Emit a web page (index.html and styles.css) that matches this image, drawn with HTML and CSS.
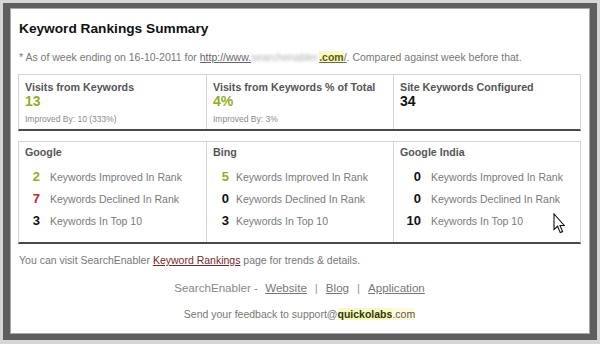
FILE: index.html
```html
<!DOCTYPE html>
<html>
<head>
<meta charset="utf-8">
<link rel="stylesheet" href="styles.css">
</head>
<body>
<div class="frame">
  <div class="content">
    <h1 class="title">Keyword Rankings Summary</h1>
    <p class="note">* As of week ending on 16-10-2011 for <a class="url" href="#">http://www.<span class="blur">searchenabler</span><span class="hl">.com</span>/</a>. Compared against week before that.</p>

    <div class="grid stats">
      <div class="cell">
        <div class="label">Visits from Keywords</div>
        <div class="value green">13</div>
        <div class="small">Improved By: 10 (333%)</div>
      </div>
      <div class="cell">
        <div class="label">Visits from Keywords % of Total</div>
        <div class="value green">4%</div>
        <div class="small">Improved By: 3%</div>
      </div>
      <div class="cell">
        <div class="label">Site Keywords Configured</div>
        <div class="value">34</div>
      </div>
    </div>

    <div class="grid engines">
      <div class="cell eng e1">
        <div class="label">Google</div>
        <div class="row"><span class="num green">2</span><span class="txt">Keywords Improved In Rank</span></div>
        <div class="row"><span class="num red">7</span><span class="txt">Keywords Declined In Rank</span></div>
        <div class="row"><span class="num">3</span><span class="txt">Keywords In Top 10</span></div>
      </div>
      <div class="cell eng e2">
        <div class="label">Bing</div>
        <div class="row"><span class="num green">5</span><span class="txt">Keywords Improved In Rank</span></div>
        <div class="row"><span class="num">0</span><span class="txt">Keywords Declined In Rank</span></div>
        <div class="row"><span class="num">3</span><span class="txt">Keywords In Top 10</span></div>
      </div>
      <div class="cell eng e3">
        <div class="label">Google India</div>
        <div class="row"><span class="num">0</span><span class="txt">Keywords Improved In Rank</span></div>
        <div class="row"><span class="num">0</span><span class="txt">Keywords Declined In Rank</span></div>
        <div class="row"><span class="num">10</span><span class="txt">Keywords In Top 10</span></div>
      </div>
    </div>

    <p class="visit">You can visit SearchEnabler <a class="kr" href="#">Keyword Rankings</a> page for trends &amp; details.</p>
    <p class="links">SearchEnabler - <a class="first" href="#">Website</a><span class="sep">|</span><a href="#">Blog</a><span class="sep">|</span><a href="#">Application</a></p>
    <p class="feedback">Send your feedback to support@<span class="hl2">quickolabs</span><span class="hl3">.com</span></p>
  </div>
  <svg class="cursor" width="12" height="21" viewBox="0 0 12 21">
    <path d="M1 1 L1 16.5 L4.6 13.3 L7.2 19.6 L9.6 18.6 L7 12.5 L11.3 12.5 Z" fill="#fff" stroke="#111" stroke-width="1.1" stroke-linejoin="miter"/>
  </svg>
</div>
</body>
</html>
```
FILE: styles.css
```css
html, body {
  margin: 0;
  padding: 0;
}
body {
  background: #d6d6d6;
  font-family: "Liberation Sans", Arial, sans-serif;
  width: 600px;
  height: 344px;
  overflow: hidden;
  padding-top: 3px;
  box-sizing: border-box;
}
.frame {
  position: relative;
  margin-left: 3px;
  width: 594px;
  height: 337px;
  box-sizing: border-box;
  background: #fff;
  border-style: solid;
  border-color: #5e5e5e;
  border-width: 5px 7px 6px 7px;
  box-shadow: inset 0 0 0 1px #a8a8a8;
}
.content {
  padding: 12px 9px 0 8px;
}
.title {
  margin: 0;
  font-size: 13.7px;
  line-height: 17px;
  font-weight: bold;
  color: #111;
  padding-left: 1px;
}
.note {
  margin: 14px 0 0 0;
  font-size: 10.5px;
  line-height: 13px;
  color: #777;
  padding-left: 1px;
}
.url {
  color: #666;
  text-decoration: underline;
}
.blur {
  display: inline-block;
  color: #b0b0b0;
  filter: blur(1.4px);
  width: 68px;
  overflow: hidden;
  vertical-align: bottom;
}
.hl {
  background: #fbf9c0;
  color: #5a5a10;
  font-weight: bold;
}
.grid {
  display: grid;
  grid-template-columns: 187px 187px 1fr;
  border: 1px solid #d4d4d4;
  border-bottom: 2px solid #4a4a4a;
}
.stats {
  margin-top: 10px;
}
.engines {
  margin-top: 10px;
}
.cell {
  border-left: 1px solid #d4d4d4;
  padding: 6px 6px 4px 6px;
}
.cell:first-child {
  border-left: none;
}
.label {
  font-size: 10.7px;
  line-height: 13px;
  font-weight: bold;
  color: #555;
}
.value {
  font-size: 14px;
  line-height: 15px;
  font-weight: bold;
  color: #111;
}
.small {
  margin-top: 5px;
  font-size: 8.5px;
  line-height: 11px;
  color: #8a8a8a;
}
.green {
  color: #8fae2c;
}
.red {
  color: #c0262a;
}
.eng {
  padding: 4px 6px 10px 6px;
}
.eng .label {
  margin-bottom: 7px;
}
.row {
  display: flex;
  align-items: center;
  height: 22px;
}
.num {
  font-size: 13px;
  line-height: 22px;
  font-weight: bold;
  text-align: right;
  color: #111;
}
.num.green { color: #8fae2c; }
.num.red { color: #c0262a; }
.txt {
  font-size: 10.5px;
  line-height: 22px;
  color: #7a7a7a;
}
.e1 .num { width: 14px; }
.e1 .txt { margin-left: 10px; }
.e2 .num { width: 16px; }
.e2 .txt { margin-left: 7px; }
.e3 .num { width: 21px; }
.e3 .txt { margin-left: 10px; }
.e1 .row { padding-left: 1px; }
.visit {
  margin: 10px 0 0 0;
  font-size: 10.5px;
  line-height: 13px;
  color: #777;
  padding-left: 1px;
}
.kr {
  color: #7a2626;
  text-decoration: underline;
}
.links {
  margin: 13px 0 0 0;
  text-align: center;
  font-size: 11.6px;
  line-height: 15px;
  color: #888;
}
.links a {
  color: #777;
  text-decoration: underline;
}
.links a.first {
  margin-left: 4px;
}
.links .sep {
  margin: 0 8px;
  color: #999;
}
.feedback {
  margin: 13px 0 0 0;
  text-align: center;
  font-size: 10.5px;
  line-height: 13px;
  color: #777;
}
.hl2 {
  background: #fbf9c0;
  color: #2a3a0a;
  font-weight: bold;
}
.hl3 {
  background: #fdfbd8;
  color: #555;
}
.cursor {
  position: absolute;
  left: 543px;
  top: 205px;
}
```
